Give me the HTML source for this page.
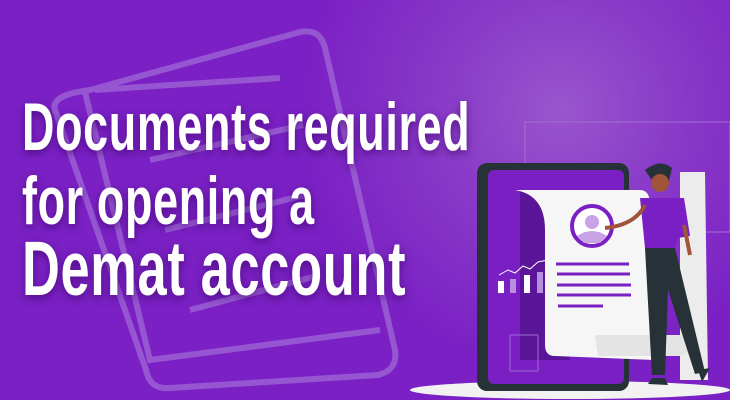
<!DOCTYPE html>
<html><head><style>
body{margin:0;width:730px;height:400px;overflow:hidden;background:#7a20c4;position:relative;font-family:"Liberation Sans",sans-serif}
.bg{position:absolute;inset:0;background:radial-gradient(circle at 560px 110px,#9a55cc 0,#8a3cc8 110px,rgba(122,32,196,0) 260px)}
.t{position:absolute;left:22px;color:#fff;font-weight:bold;white-space:nowrap;transform-origin:0 0;text-shadow:0 3px 10px rgba(50,0,90,.6);letter-spacing:1px}
</style></head><body>
<div class="bg"></div>
<svg width="730" height="400" style="position:absolute;left:0;top:0">
 <g stroke="#a673d8" stroke-width="6" fill="none" opacity=".65">
  <path d="M90 90 L300 32 Q320 28 325 48 L395 350 Q398 370 378 375 L170 388 Q150 390 146 370 L55 110 Q50 95 90 90Z"/>
  <path d="M85 92 L150 360 L380 330"/>
  <path d="M95 90 L280 78 M150 160 L303 125 M165 230 L305 195 M190 310 L320 275"/>
 </g>
 <rect x="525" y="122" width="205" height="110" fill="none" stroke="#a070d0" stroke-width="1"/>
 <ellipse cx="570" cy="390" rx="160" ry="9" fill="#f2f2f2"/>
 <rect x="477" y="163" width="152" height="228" rx="10" fill="#263238"/>
 <rect x="488" y="170" width="136" height="214" rx="6" fill="#7a1fc4"/>
 <rect x="520" y="190" width="50" height="170" fill="#5a1598"/>
 <path d="M680 172 L705 172 L708 380 L680 380Z" fill="#ececec"/>
 <path d="M515 190 L640 190 Q650 190 650 205 L655 360 L555 356 Q545 356 545 345 L545 230 Q545 195 515 190Z" fill="#f6f6f6"/>
 <path d="M595 335 L690 335 Q695 350 680 356 L598 356Z" fill="#e4e4e4"/>
 <circle cx="592" cy="226" r="20" fill="#fff" stroke="#7a1fc4" stroke-width="4"/>
 <circle cx="592" cy="222" r="7" fill="#c9a3e6"/>
 <path d="M577 236 Q592 226 607 236 L600 243 L584 243Z" fill="#c9a3e6"/>
 <g stroke="#7a1fc4" stroke-width="3"><path d="M556 264H629M557 274H630M557 285H631M557 295H631M558 306H603"/></g>
 <path d="M499 275 L508 270 L515 273 L523 266 L530 269 L538 262 L548 260" stroke="#fff" fill="none" stroke-width="1"/>
 <rect x="498" y="281" width="6" height="12" fill="#fff"/><rect x="510" y="279" width="6" height="14" fill="#b98ee0"/><rect x="524" y="275" width="6" height="18" fill="#fff"/><rect x="537" y="272" width="6" height="21" fill="#b98ee0"/>
 <rect x="510" y="335" width="28" height="36" fill="none" stroke="#9c6ad4" stroke-width="1"/>
 <path d="M645 170 Q660 158 672 168 L668 185 L655 185Z" fill="#263238"/>
 <circle cx="660" cy="183" r="9" fill="#a0543a"/>
 <path d="M640 198 L684 198 L690 236 L678 238 L675 248 L645 248Z" fill="#7a1fc4"/>
 <path d="M645 205 Q635 225 605 228" stroke="#a0543a" stroke-width="4" fill="none"/>
 <path d="M684 225 L690 255" stroke="#a0543a" stroke-width="4"/>
 <path d="M645 248 L675 248 L705 372 L695 374 L668 290 L665 375 L652 375Z" fill="#263238"/>
 <path d="M648 384 L668 385 L665 378 L652 378Z" fill="#263238"/><path d="M698 370 L710 368 L702 382Z" fill="#263238"/>
</svg>
<div class="t" style="top:88px;font-size:68px;transform:scaleX(.66)">Documents required</div>
<div class="t" style="top:162px;font-size:68px;transform:scaleX(.66)">for opening a</div>
<div class="t" style="top:225px;font-size:77px;transform:scaleX(.68)">Demat account</div>
</body></html>
